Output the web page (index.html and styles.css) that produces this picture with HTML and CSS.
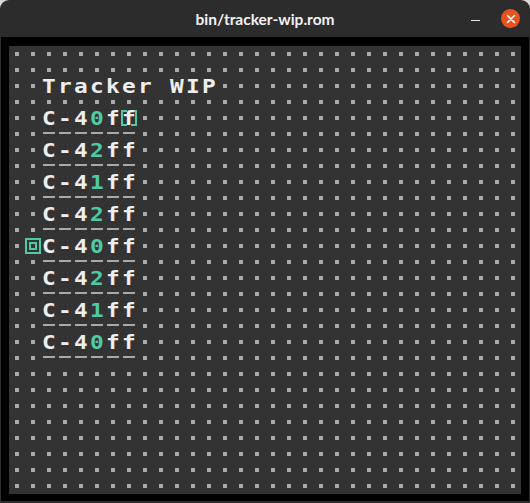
FILE: index.html
```html
<!DOCTYPE html>
<html>
<head>
<meta charset="utf-8">
<link rel="stylesheet" href="styles.css">
</head>
<body>
<div class="window">
  <header class="titlebar">
    <span></span>
    <span class="title">bin/tracker-wip.rom</span>
    <div class="controls">
      <span class="min"></span>
      <span class="close"><svg width="10" height="10" viewBox="0 0 10 10"><path d="M1.5 1.5 L8.5 8.5 M8.5 1.5 L1.5 8.5" stroke="#fff" stroke-width="1.6" stroke-linecap="round"/></svg></span>
    </div>
  </header>
  <main class="frame">
    <div class="screen">
      <div class="line"><span class="c"><i>T</i></span><span class="c"><i>r</i></span><span class="c"><i>a</i></span><span class="c"><i>c</i></span><span class="c"><i>k</i></span><span class="c"><i>e</i></span><span class="c"><i>r</i></span><span class="c"><i> </i></span><span class="c"><i>W</i></span><span class="c"><i>I</i></span><span class="c"><i>P</i></span></div>
      <div class="line"></div>
      <div class="line"><span class="c"><i>C</i></span><span class="c"><i>-</i></span><span class="c"><i>4</i></span><span class="c g"><i>0</i></span><span class="c"><i>f</i></span><span class="c cursor"><svg class="brk" viewBox="0 0 8 8" width="16" height="16"><path d="M0 0h3v1H1v6h2v1H0z M8 0H5v1h2v6H5v1h3z" fill="#4fcaa4"/></svg><i>f</i></span></div>
      <div class="line"><span class="d"></span><span class="d"></span><span class="d"></span><span class="d"></span><span class="d"></span><span class="d"></span></div>
      <div class="line"><span class="c"><i>C</i></span><span class="c"><i>-</i></span><span class="c"><i>4</i></span><span class="c g"><i>2</i></span><span class="c"><i>f</i></span><span class="c"><i>f</i></span></div>
      <div class="line"><span class="d"></span><span class="d"></span><span class="d"></span><span class="d"></span><span class="d"></span><span class="d"></span></div>
      <div class="line"><span class="c"><i>C</i></span><span class="c"><i>-</i></span><span class="c"><i>4</i></span><span class="c g"><i>1</i></span><span class="c"><i>f</i></span><span class="c"><i>f</i></span></div>
      <div class="line"><span class="d"></span><span class="d"></span><span class="d"></span><span class="d"></span><span class="d"></span><span class="d"></span></div>
      <div class="line"><span class="c"><i>C</i></span><span class="c"><i>-</i></span><span class="c"><i>4</i></span><span class="c g"><i>2</i></span><span class="c"><i>f</i></span><span class="c"><i>f</i></span></div>
      <div class="line"><span class="d"></span><span class="d"></span><span class="d"></span><span class="d"></span><span class="d"></span><span class="d"></span></div>
      <div class="line play"><span class="c"><svg viewBox="0 0 8 8" width="16" height="16"><path d="M0 0h8v8H0z M1 1v6h6V1z M2 2h4v4H2z M3 3v2h2V3z" fill="#4fcaa4" fill-rule="evenodd"/></svg></span><span class="c"><i>C</i></span><span class="c"><i>-</i></span><span class="c"><i>4</i></span><span class="c g"><i>0</i></span><span class="c"><i>f</i></span><span class="c"><i>f</i></span></div>
      <div class="line"><span class="d"></span><span class="d"></span><span class="d"></span><span class="d"></span><span class="d"></span><span class="d"></span></div>
      <div class="line"><span class="c"><i>C</i></span><span class="c"><i>-</i></span><span class="c"><i>4</i></span><span class="c g"><i>2</i></span><span class="c"><i>f</i></span><span class="c"><i>f</i></span></div>
      <div class="line"><span class="d"></span><span class="d"></span><span class="d"></span><span class="d"></span><span class="d"></span><span class="d"></span></div>
      <div class="line"><span class="c"><i>C</i></span><span class="c"><i>-</i></span><span class="c"><i>4</i></span><span class="c g"><i>1</i></span><span class="c"><i>f</i></span><span class="c"><i>f</i></span></div>
      <div class="line"><span class="d"></span><span class="d"></span><span class="d"></span><span class="d"></span><span class="d"></span><span class="d"></span></div>
      <div class="line"><span class="c"><i>C</i></span><span class="c"><i>-</i></span><span class="c"><i>4</i></span><span class="c g"><i>0</i></span><span class="c"><i>f</i></span><span class="c"><i>f</i></span></div>
      <div class="line"><span class="d"></span><span class="d"></span><span class="d"></span><span class="d"></span><span class="d"></span><span class="d"></span></div>
    </div>
  </main>
</div>
</body>
</html>
```

FILE: styles.css
```css
html, body {
  margin: 0;
  padding: 0;
}
body {
  background: #d8d8d8;
  width: 530px;
  height: 503px;
  overflow: hidden;
}
.window {
  width: 530px;
  height: 503px;
  display: flex;
  flex-direction: column;
}
.titlebar {
  height: 37px;
  flex: none;
  background: #2c2c2c;
  border-radius: 9px 9px 0 0;
  display: grid;
  grid-template-columns: 1fr auto 1fr;
  align-items: center;
}
.title {
  font: 700 15.5px "Lato", "Noto Sans", sans-serif;
  color: #f2f2f2;
  padding-top: 1px;
}
.controls {
  justify-self: end;
  display: flex;
  align-items: center;
  gap: 21px;
  padding-right: 10px;
}
.min {
  width: 9px;
  height: 1.5px;
  background: #e8e8e8;
  margin-top: 4px;
}
.close {
  width: 19px;
  height: 19px;
  border-radius: 50%;
  background: #e65321;
  display: flex;
  align-items: center;
  justify-content: center;
}
.close svg {
  display: block;
}
.frame {
  flex: 1;
  background: #000;
  border: 1px solid #2e2e2e;
  border-top: none;
  border-bottom-width: 2px;
  padding: 9px 8px 7px 8px;
}
.screen {
  width: 512px;
  height: 448px;
  box-sizing: border-box;
  padding-top: 32px;
  background-color: #aaaaaa;
  background-image:
    linear-gradient(to bottom, #333333 6px, transparent 6px, transparent 10px, #333333 10px),
    linear-gradient(to right, #333333 6px, transparent 6px, transparent 10px, #333333 10px);
  background-size: 16px 16px;
}
.line {
  display: flex;
  height: 16px;
  padding-left: 32px;
}
.line.play {
  padding-left: 16px;
}
.c, .d {
  width: 16px;
  height: 16px;
  background-color: #333333;
  flex: none;
}
.c {
  position: relative;
  color: #eeeeee;
  font: 700 19px/16px "DejaVu Sans Mono", monospace;
  text-align: center;
  white-space: pre;
}
.c i {
  display: block;
  font-style: normal;
  transform: scaleX(1.2);
}
.c svg {
  display: block;
}
.g {
  color: #4fcaa4;
}
.d {
  background-image: linear-gradient(#aaaaaa, #aaaaaa);
  background-size: 12px 2px;
  background-position: 2px 6px;
  background-repeat: no-repeat;
}
.cursor .brk {
  position: absolute;
  left: 0;
  top: 0;
}
```
